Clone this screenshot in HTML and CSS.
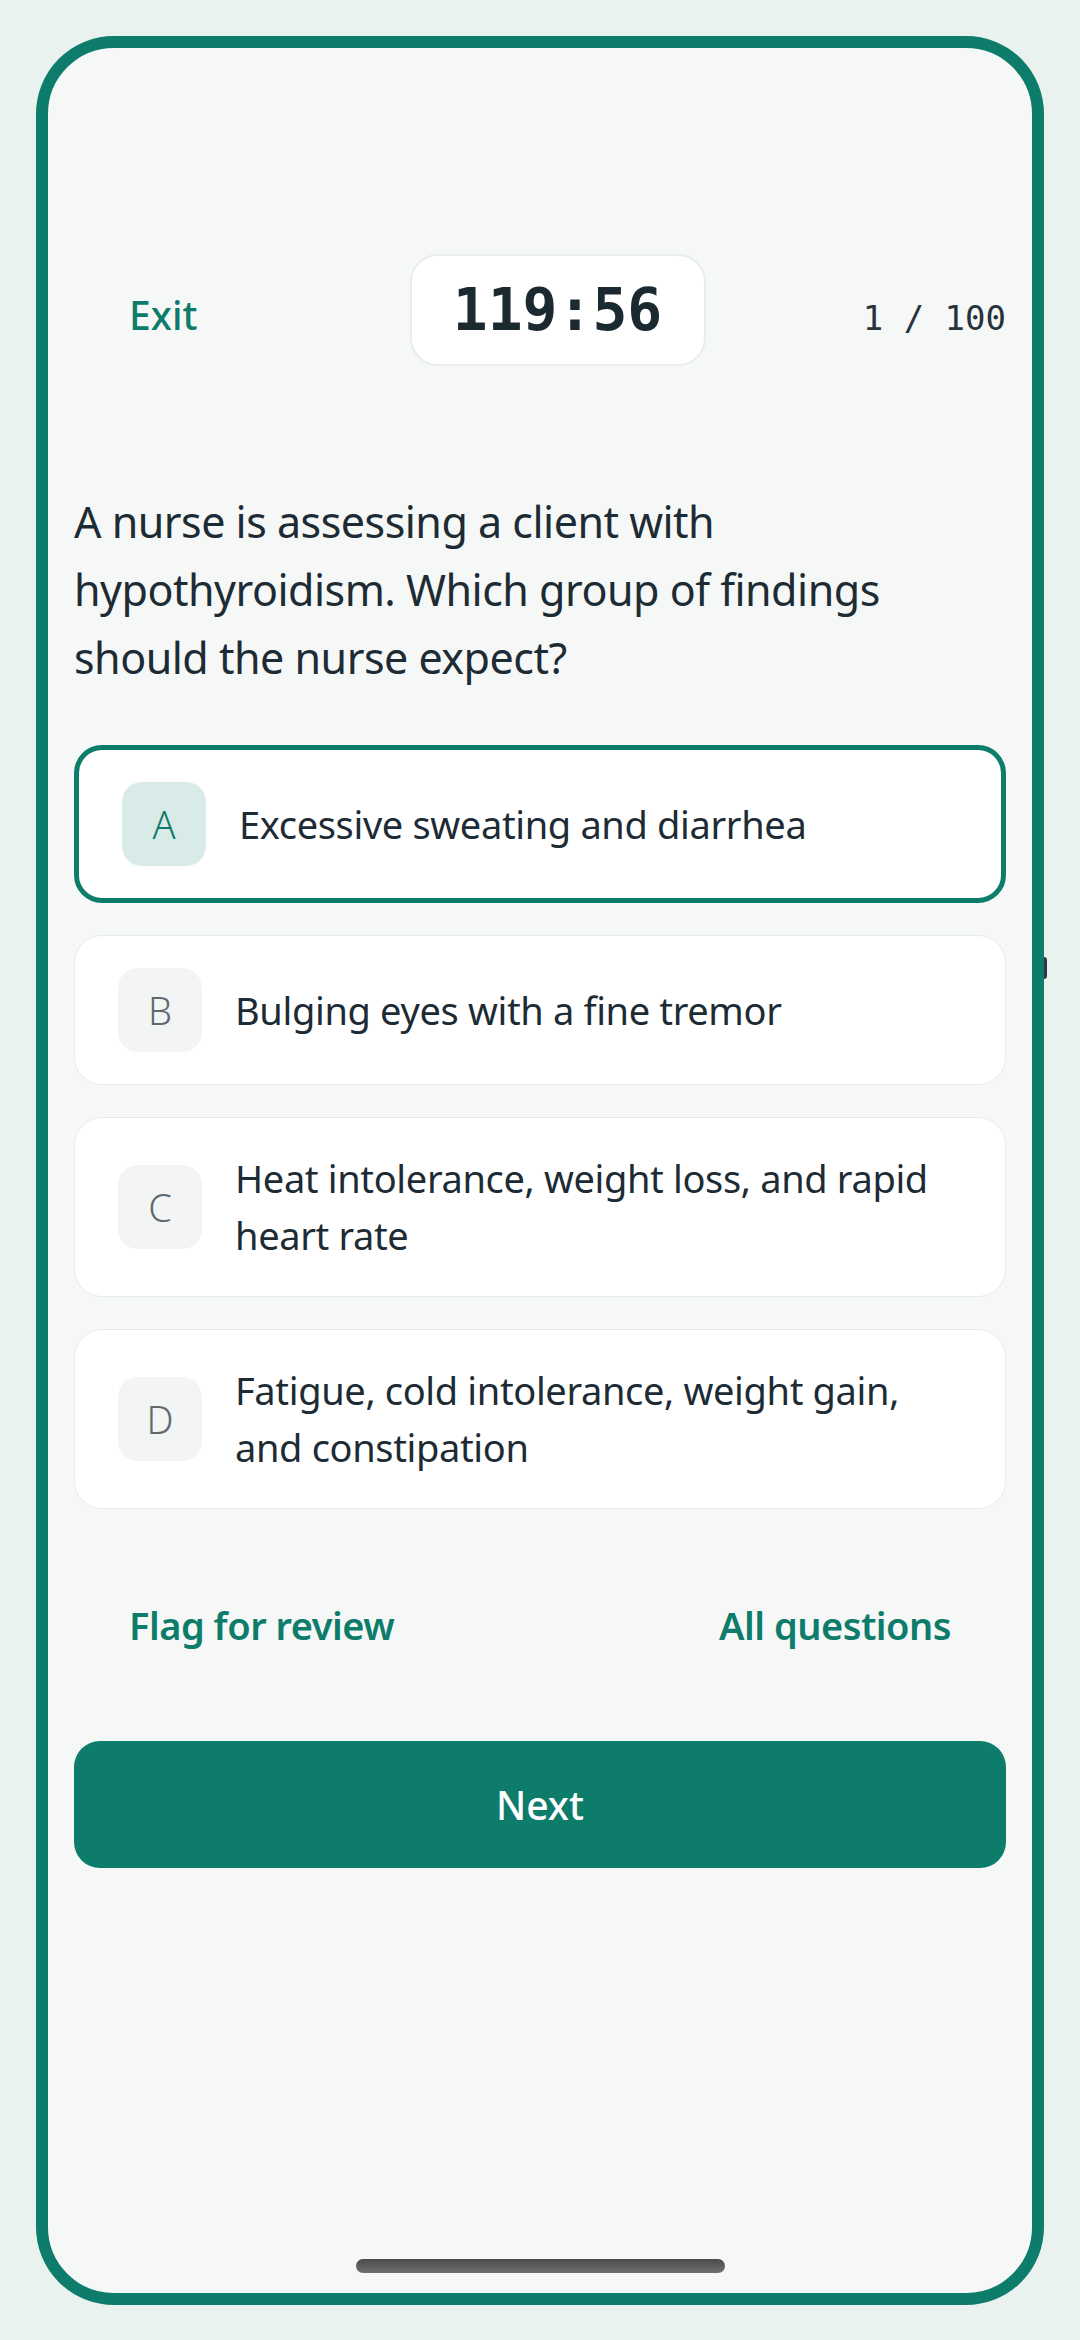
FILE: index.html
```html
<!DOCTYPE html>
<html>
<head>
    <link rel="stylesheet" href="styles.css">
</head>
<body>
    <div class="phone">
        <span class="side-key"></span>

        <div class="exam-header">
            <button class="text-btn">Exit</button>
            <div class="timer">119:56</div>
            <div class="counter">1 / 100</div>
        </div>

        <p class="question">A nurse is assessing a client with hypothyroidism. Which group of findings should the nurse expect?</p>

        <div class="options">
            <div class="option selected">
                <span class="letter">A</span>
                <span class="option-text">Excessive sweating and diarrhea</span>
            </div>
            <div class="option">
                <span class="letter">B</span>
                <span class="option-text">Bulging eyes with a fine tremor</span>
            </div>
            <div class="option">
                <span class="letter">C</span>
                <span class="option-text">Heat intolerance, weight loss, and rapid heart rate</span>
            </div>
            <div class="option">
                <span class="letter">D</span>
                <span class="option-text">Fatigue, cold intolerance, weight gain, and constipation</span>
            </div>
        </div>

        <div class="exam-links">
            <button class="text-btn link">Flag for review</button>
            <button class="text-btn link">All questions</button>
        </div>

        <button class="next-btn">Next</button>

        <div class="home-bar"></div>
    </div>
</body>
</html>
```

FILE: styles.css
```css
/* page + device frame */
body {
    margin: 0;
    padding: 36px;
    background: #e9f2ef;
    font-family: 'Noto Sans', 'Open Sans', sans-serif;
    color: #1d2b34;
}

.phone {
    position: relative;
    box-sizing: border-box;
    width: 1008px;
    height: 2269px;
    border: 12px solid #0e7c6b;
    border-radius: 78px;
    background: #f6f8f7;
    padding: 0 26px;
    display: flex;
    flex-direction: column;
}

/* little hardware key on the right edge */
.side-key {
    position: absolute;
    top: 909px;
    right: -15px;
    width: 3px;
    height: 22px;
    border-radius: 0 4px 4px 0;
    background: #2a3a40;
}

button {
    font-family: inherit;
    border: none;
    background: none;
    cursor: pointer;
}

/* header: exit, timer, counter */
.exam-header {
    display: flex;
    justify-content: space-between;
    align-items: baseline;
    margin-top: 206px;
}

.text-btn {
    padding: 0 55px;
    font-size: 39px;
    font-weight: 500;
    color: #0e7c6b;
}

.timer {
    box-sizing: border-box;
    width: 296px;
    height: 112px;
    line-height: 108px;
    border: 2px solid #e8eded;
    border-radius: 28px;
    background: #ffffff;
    text-align: center;
    font-family: 'DejaVu Sans Mono', 'Liberation Mono', monospace;
    font-size: 58px;
    font-weight: bold;
    color: #1b2931;
}

.counter {
    font-family: 'DejaVu Sans Mono', 'Liberation Mono', monospace;
    font-size: 34px;
    color: #26333b;
}

/* question */
.question {
    margin: 122px 0 53px;
    font-size: 43px;
    line-height: 68px;
    letter-spacing: -0.5px;
}

/* answer cards */
.options {
    display: flex;
    flex-direction: column;
    gap: 32px;
}

.option {
    display: flex;
    align-items: center;
    gap: 33px;
    padding: 32px 43px;
    border: 1px solid #e6ebea;
    border-radius: 28px;
    background: #ffffff;
}

.option.selected {
    border: 5px solid #0e7c6b;
}

.letter {
    flex: none;
    width: 84px;
    height: 84px;
    line-height: 84px;
    border-radius: 20px;
    background: #f3f5f5;
    text-align: center;
    font-size: 38px;
    font-weight: 300;
    color: #5e6a70;
}

.selected .letter {
    background: #d9ebe8;
    color: #137a69;
}

.option-text {
    font-size: 38px;
    line-height: 57px;
    letter-spacing: -0.35px;
}

/* bottom actions */
.exam-links {
    display: flex;
    justify-content: space-between;
    margin: 88px 0;
}

.link {
    font-size: 38px;
    line-height: 56px;
    font-weight: 600;
    letter-spacing: -0.5px;
}

.next-btn {
    height: 127px;
    border-radius: 26px;
    background: #0e7c6b;
    color: #ffffff;
    font-size: 39px;
    font-weight: 500;
}

.home-bar {
    align-self: center;
    width: 369px;
    height: 14px;
    margin: auto 0 20px;
    border-radius: 7px;
    background: linear-gradient(#4a4a4a, #707070);
}
```
